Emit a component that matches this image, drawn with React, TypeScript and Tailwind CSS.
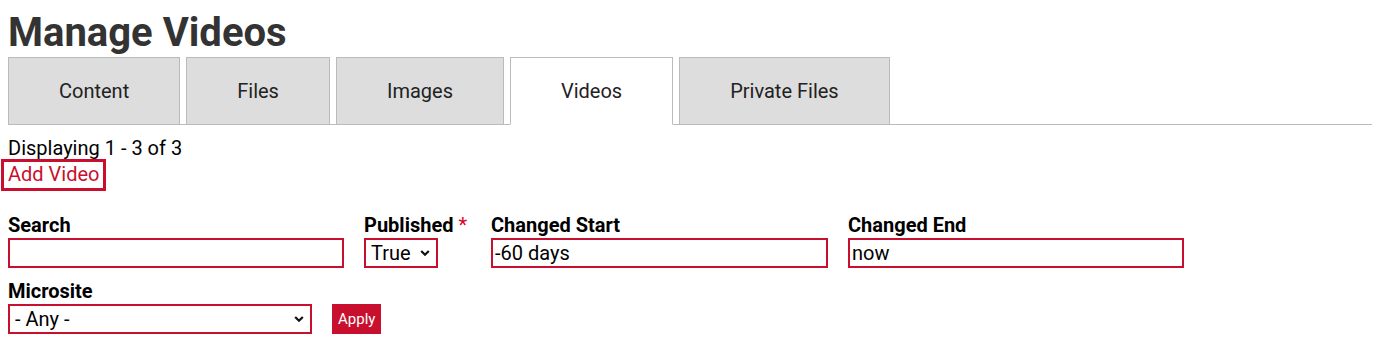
import React from "react";

function Chevron() {
  return (
    <svg width="10" height="7" viewBox="0 0 10 7" className="pointer-events-none absolute right-[8px] top-1/2 -translate-y-1/2">
      <path d="M1.2 1.5 L5 5.2 L8.8 1.5" fill="none" stroke="#111" strokeWidth="2.2" />
    </svg>
  );
}

export default function App() {
  const tabs = ["Content", "Files", "Images", "Videos", "Private Files"];
  return (
    <div className="min-h-[351px] bg-white px-2 text-black" style={{ fontFamily: "Roboto, 'Liberation Sans', sans-serif" }}>
      <h1 className="pt-[9px] text-[40px] font-bold leading-[48px] text-[#333]">Manage Videos</h1>

      <ul className="flex gap-[6px] border-b border-[#bbb]">
        {tabs.map((t) => {
          const active = t === "Videos";
          return (
            <li
              key={t}
              className={
                "-mb-px flex h-[68px] items-center border border-[#bbb] px-[50px] text-[20px] text-[#222] " +
                (active ? "border-b-white bg-white" : "bg-[#ddd]")
              }
            >
              {t}
            </li>
          );
        })}
      </ul>

      <div className="mt-[12px] text-[20px] leading-[22px]">Displaying 1 - 3 of 3</div>
      <div className="-ml-[7px]">
        <a className="inline-block border-[3px] border-[#c8102e] px-[4px] pt-[1px] pb-[3px] text-[20px] leading-[22px] text-[#c8102e]">
          Add Video
        </a>
      </div>

      <div className="mt-[22px] flex flex-wrap items-end gap-x-5 gap-y-[11px]">
        <div className="w-[336px]">
          <label className="mb-px block text-[20px] font-bold leading-[24px]">Search</label>
          <input className="block h-[30px] w-[336px] border-2 border-[#c8102e] px-[2px] text-[20px] leading-[22px] outline-none" />
        </div>
        <div className="w-[107px]">
          <label className="mb-px block text-[20px] font-bold leading-[24px]">
            Published <span className="font-normal text-[#e0002a]">*</span>
          </label>
          <div className="relative w-[74px]">
            <select className="block h-[30px] w-[74px] appearance-none border-2 border-[#c8102e] bg-white pl-[5px] text-[20px] leading-[22px] outline-none">
              <option>True</option>
            </select>
            <Chevron />
          </div>
        </div>
        <div className="w-[337px]">
          <label className="mb-px block text-[20px] font-bold leading-[24px]">Changed Start</label>
          <input
            defaultValue="-60 days"
            className="block h-[30px] w-[337px] border-2 border-[#c8102e] px-[2px] text-[20px] leading-[22px] outline-none"
          />
        </div>
        <div className="w-[336px]">
          <label className="mb-px block text-[20px] font-bold leading-[24px]">Changed End</label>
          <input
            defaultValue="now"
            className="block h-[30px] w-[336px] border-2 border-[#c8102e] px-[2px] text-[20px] leading-[22px] outline-none"
          />
        </div>
        <div className="w-[304px]">
          <label className="mb-px block text-[20px] font-bold leading-[24px]">Microsite</label>
          <div className="relative w-[304px]">
            <select className="block h-[30px] w-[304px] appearance-none border-2 border-[#c8102e] bg-white pl-[5px] text-[20px] leading-[22px] outline-none">
              <option>- Any -</option>
            </select>
            <Chevron />
          </div>
        </div>
        <button className="h-[30px] bg-[#c8102e] px-[6px] text-[15px] text-white">Apply</button>
      </div>
    </div>
  );
}
